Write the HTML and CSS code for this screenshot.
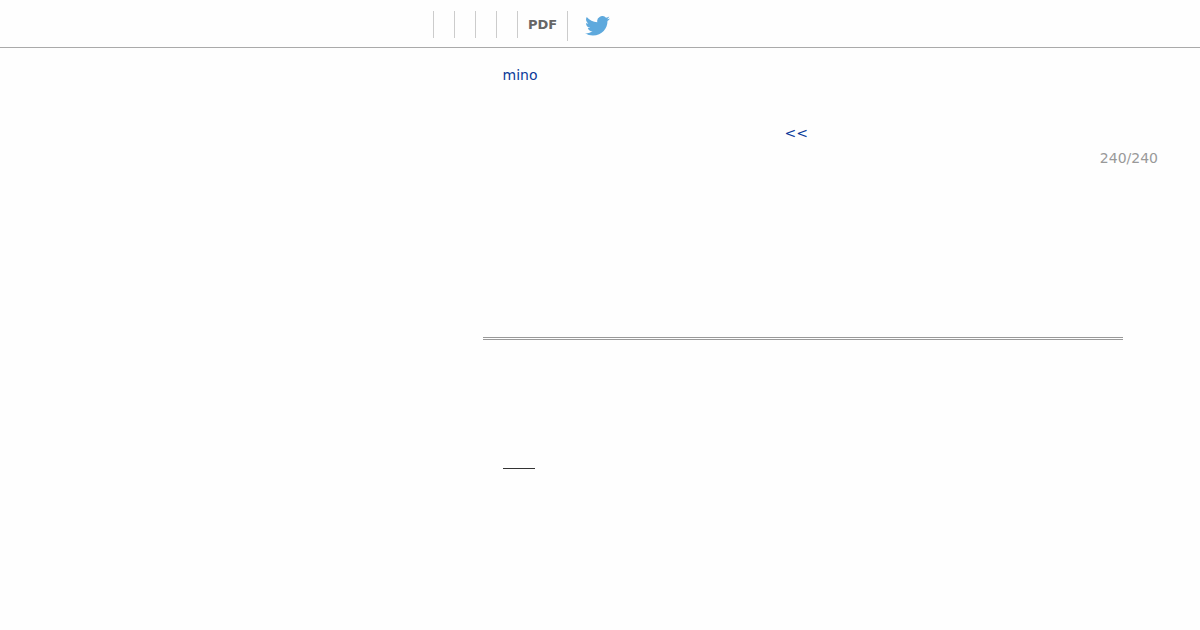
FILE: index.html
```html
<!DOCTYPE html>
<html lang="en">

<head>
  <meta charset="UTF-8" />
  <meta name="viewport" content="width=device-width, initial-scale=1.0" />
  <title>mino</title>
  <link rel="stylesheet" href="styles.css">
</head>

<body>
  <header class="toolbar">
    <ul class="menu">
      <li></li>
      <li></li>
      <li></li>
      <li></li>
      <li class="pdf">PDF</li>
      <li class="share">
        <svg class="bird" viewBox="0 0 24 20" preserveAspectRatio="none" aria-label="Twitter">
          <path d="M24 2.400a9.800 9.800 0 0 1-2.830.780 4.940 4.940 0 0 0 2.170-2.730 9.900 9.900 0 0 1-3.130 1.200A4.920 4.920 0 0 0 11.830 6.130 13.970 13.970 0 0 1 1.670.980 4.930 4.930 0 0 0 3.200 7.550a4.900 4.900 0 0 1-2.230-.620v.060a4.930 4.930 0 0 0 3.950 4.830 4.900 4.900 0 0 1-2.220.080 4.930 4.930 0 0 0 4.600 3.420A9.880 9.880 0 0 1 0 17.360a13.940 13.940 0 0 0 7.550 2.210c9.060 0 14.010-7.500 14.010-14.010 0-.210 0-.420-.020-.630A10 10 0 0 0 24 2.400z" />
        </svg>
      </li>
    </ul>
  </header>

  <main class="content">
    <a class="author" href="#">mino</a>
    <a class="prev" href="#">&lt;&lt;</a>
    <div class="page-count">240/240</div>
    <hr class="divider">
    <hr class="short-line">
  </main>
</body>

</html>
```

FILE: styles.css
```css
body {
  margin: 0;
  font-family: "DejaVu Sans", sans-serif;
  font-size: 14px;
  line-height: 20px;
  background: #fefefe;
}

a {
  color: #0b3a99;
  text-decoration: none;
}

.toolbar {
  box-sizing: border-box;
  height: 48px;
  padding: 11px 0 0 433px;
  border-bottom: 1px solid #aaa;
}

.menu {
  display: flex;
  margin: 0;
  padding: 0;
  list-style: none;
}

.menu li {
  box-sizing: border-box;
  height: 27px;
  padding: 0 10px;
  border-left: 1px solid #ccc;
}

.menu .pdf {
  width: 50px;
  color: #666;
  font-size: 13px;
  font-weight: bold;
  line-height: 27px;
}

.menu .share {
  height: 30px;
  padding: 5px 0 0 17px;
}

.bird {
  display: block;
  width: 25px;
  height: 20px;
  fill: #5ea9dd;
}

/* Article column */
.content {
  display: flex;
  flex-direction: column;
  width: 640px;
  margin-left: 483px;
  padding-top: 17px;
}

.author {
  align-self: flex-start;
  margin-left: 19.5px;
}

.prev {
  align-self: flex-start;
  margin: 38px 0 0 301.6px;
}

.page-count {
  align-self: flex-end;
  margin: 5px -35px 0 0;
  color: #999;
}

.divider {
  width: 100%;
  margin: 169px 0 0;
  border: 0;
  border-top: 3px double #999;
}

.short-line {
  width: 32px;
  margin: 128px 0 0 20px;
  border: 0;
  border-top: 1px solid #333;
}
```
